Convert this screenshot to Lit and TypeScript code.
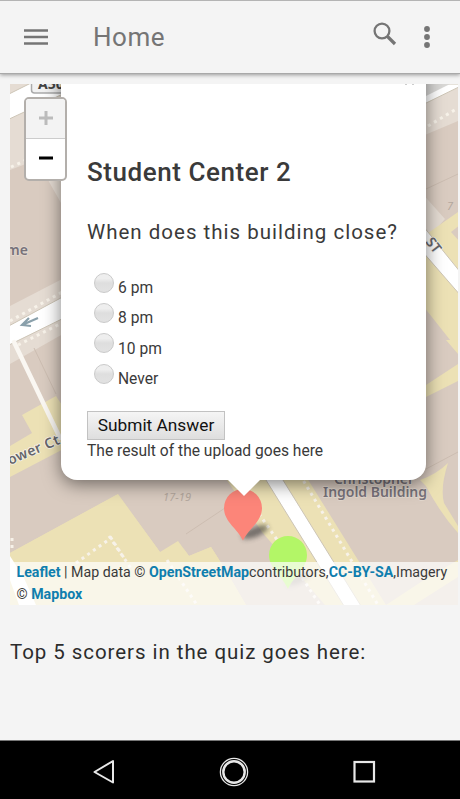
import { LitElement, html, css, svg } from "lit";
import { customElement } from "lit/decorators.js";

@customElement("map-canvas")
class MapCanvas extends LitElement {
  static styles = css`
    :host { display: block; width: 448px; height: 521px; }
    svg { display: block; }
    .label { font: 600 14px "Noto Sans", "Open Sans", sans-serif; fill: #77727a; stroke: #e4dad0; stroke-width: 1.5px; paint-order: stroke; }
    .street { fill: #66666a; stroke: #f7f4ee; }
    .num { font: italic 11px "Noto Sans", sans-serif; fill: #b3a79d; }
    .dots { fill: none; stroke: #f7f2e9; stroke-width: 3; stroke-dasharray: 3 4; }
    .road { fill: #fff; stroke: #cdc5b6; stroke-width: 1; }
    .yellow { fill: #ece1b5; }
    .walk { fill: #e5dcd3; }
    .block { fill: #d9cbc0; }
    .seam { fill: none; stroke: #ccbdb1; stroke-width: 1; }
  `;
  render() {
    return html`<svg width="448" height="521" viewBox="10 84 448 521">
      <defs>
        <filter id="soft" x="-50%" y="-50%" width="200%" height="200%"><feGaussianBlur stdDeviation="2.6" /></filter>
      </defs>
      <rect class="block" x="10" y="84" width="448" height="521" />
      ${svg`
      <path class="walk" d="M10 84H75V145L10 170Z" />
      <path class="road" d="M5 96L33 82H80V86L5 121Z" />
      <path class="dots" d="M11 167L65 142" />
      <path class="walk" d="M48 180L61 203V176Z" />
      <path class="walk" d="M10 306L70 275V330L10 364Z" />
      <path class="road" d="M5 328L70 293V315L5 347Z" />
      <path class="dots" d="M10 321L66 290M18 345L66 321" />
      <path d="M38 318L22 325M29 318L22 325L31 326" stroke="#8aa0ab" stroke-width="2.2" fill="none" />
      <path class="seam" d="M34 348L56 394" />
      <path class="yellow" d="M10 446L32 433L22 415L56 396L75 425V443L10 477Z" />
      <path d="M14 342L60 438" stroke="#faf7f2" stroke-width="4.5" stroke-linecap="round" />
      <path class="yellow" d="M10 553L122 492L160 552L178 541L189 556L211 547L225 569L246 605H10Z" />
      <path class="block" d="M110 470H222L236 500L250 540L160 552L118 495Z" />
      <path class="yellow" d="M10 553L118 494L160 552L178 541L189 556L211 547L225 569L246 605H10Z" />
      <path class="seam" d="M186 534L225 508" />
      <path class="dots" d="M76 563L111 538L126 561M109 536L132 570" />
      <path d="M10 556L24 578L36 605H19L10 580Z" fill="#fff" />
      <path class="dots" d="M12 538V550M167 560L197 605" />

      <path class="yellow" d="M220 470H302L386 605H325L262 532Z" />
      <path class="dots" d="M259 514L280 544L320 605M300 475L378 605" />
      <path class="road" d="M261 472H278L361 606H344Z" />
      <path class="yellow" d="M386 605L427 578L458 560V577L414 605Z" />

      <path class="walk" d="M420 84H458V121L420 137Z" />
      <path class="road" d="M420 84H465V84L420 106Z" />
      <path d="M426 84H450L426 96Z" fill="#d9d8d6" />
      <path class="dots" d="M428 126L458 108" />
      <path class="seam" d="M426 189L458 174M426 469L458 452" />
      <path class="walk" d="M420 191L445 219L432 234L420 232Z" />
      <path class="yellow" d="M431 231L458 212V350L420 302V238Z" />
      <path class="block" d="M451 232L460 225V242Z" />
      <path class="road" d="M415 216L461 273V296L415 243Z" />
      <path class="yellow" d="M426 385L458 364V381L426 397ZM446 340H458V354Z" />
      <path class="yellow" d="M420 480Q437 474 448 463Q440 488 444 503L458 526V533Q440 513 426 486Z" />
      <text class="label" text-anchor="end" x="28" y="255">me</text>
      <text class="label street" transform="translate(10 465) rotate(-23)" x="0" y="0" textLength="55">ower Ct</text>
      <text class="label street" transform="translate(425 242) rotate(52)" x="0" y="0">ST</text>
      <text class="num" x="163" y="501" textLength="28">17-19</text>
      <text class="num" x="447" y="210">7</text>
      <text class="label" x="334" y="484" textLength="80">Christopher</text>
      <text class="label" x="323" y="497" textLength="104">Ingold Building</text>
      <rect x="31.500" y="70" width="50" height="23" rx="3" fill="#f2f2f2" stroke="#aaa" stroke-width="1.5" />
      <text x="38" y="89" font-family="Noto Sans" font-weight="700" font-size="14" fill="#444">A501</text>

      <ellipse cx="255" cy="532" rx="14" ry="5" transform="rotate(-22 255 532)" fill="#333" opacity=".6" filter="url(#soft)" />
      <ellipse cx="299" cy="579" rx="13" ry="4" transform="rotate(-25 299 579)" fill="#333" opacity=".3" filter="url(#soft)" />
      <path d="M243 540.500C238 529 224 522 224 508A19 19 0 0 1 262 508C262 522 248 529 243 540.500Z" fill="#fc8579" />
      <path d="M288 589C283 577 269 569 269 555A19 19 0 0 1 307 555C307 569 293 577 288 589Z" fill="#b3f667" />
      `}
    </svg>`;
  }
}

@customElement("app-root")
class AppRoot extends LitElement {
  static styles = css`
    :host { display: flex; flex-direction: column; width: 460px; height: 799px; background: #f4f4f4; font-family: Roboto, sans-serif; color: #3a3a3a; overflow: hidden; }
    * { box-sizing: border-box; }
    header { height: 74px; flex: none; display: flex; align-items: center; padding: 0 30px 0 24px; border-top: 1px solid #b4b4b4; border-bottom: 1px solid #a9a9a9; box-shadow: 0 1px 4px rgba(0,0,0,.38); color: #757575; position: relative; }
    header svg { display: block; flex: none; }
    h1 { flex: 1; margin: 0 0 0 45px; font-size: 26px; font-weight: 400; letter-spacing: .5px; line-height: 30px; }
    .search { margin: 0 27px 6px 0; }
    .map { position: relative; width: 448px; height: 521px; margin: 10px 0 0 10px; flex: none; overflow: hidden; }
    .zoom { position: absolute; left: 14px; top: 13px; width: 43px; height: 84px; border: 2px solid #b3afab; border-radius: 5px; background: #fff; overflow: hidden; }
    .zoom div { height: 40px; display: grid; place-items: center; }
    .zoom .in { background: #f3f3f3; border-bottom: 1px solid #ccc; }
    .zoom svg { display: block; margin-top: -2px; }
    .popup { position: absolute; left: 51px; top: -20px; width: 365px; height: 416px; border-radius: 0 0 16px 16px; background: #fff; box-shadow: 0 4px 18px rgba(0,0,0,.5); padding: 92px 26px 0; }
    .tip { position: absolute; left: 217px; top: 395px; }
    .close { position: absolute; right: 12px; top: 19px; width: 9px; height: 3px; display: flex; justify-content: space-between; }
    .close i { width: 2px; height: 2px; background: #ccc; }
    h2 { margin: 0; font-size: 26px; line-height: 32px; font-weight: 500; letter-spacing: .55px; white-space: nowrap; }
    .question { margin: 30px 0 0; font-size: 20.5px; line-height: 28px; letter-spacing: 1px; white-space: nowrap; }
    .options { margin-top: 24px; }
    label { display: flex; height: 30.4px; padding-left: 7px; gap: 4px; font-size: 15.6px; line-height: 18px; }
    .radio { width: 20px; height: 20px; margin-top: 2.500px; border-radius: 50%; border: 1px solid #cacaca; background: linear-gradient(#eee 25%, #dedede 50%, #e2e2e2); }
    label span { margin-top: 9px; }
    button { display: block; width: 138px; height: 29px; margin: 19px 0 0; padding: 0; border: 1px solid #c2c2c2; border-radius: 0; background: linear-gradient(#f5f5f5, #dedede); font: 17.3px/26px Roboto, sans-serif; color: #111; white-space: nowrap; }
    .result { font-size: 15.6px; line-height: 20px; margin-top: 1px; white-space: nowrap; }
    .credit { position: absolute; left: 0; right: 0; bottom: 0; height: 43px; padding: 0 6.500px; background: rgba(255,255,255,.7); font-size: 14.200px; line-height: 21.500px; white-space: nowrap; }
    .credit b { color: #0f7eae; font-weight: 700; }
    .scores { margin: 33px 0 0 10px; font-size: 20.5px; line-height: 28px; letter-spacing: .94px; color: #2c2c2c; }
    nav { margin-top: auto; height: 59px; background: #000; border-top: 1px solid #777; flex: none; }
    nav svg { display: block; }
  `;
  render() {
    return html`
      <header>
        <svg width="24" height="20" viewBox="0 0 24 20"><path d="M0 3.500H24M0 10H24M0 16.500H24" stroke="#757575" stroke-width="2.500" /></svg>
        <h1>Home</h1>
        <svg class="search" width="24" height="24" viewBox="0 0 24 24" fill="none" stroke="#757575"><circle cx="9" cy="9" r="7.400" stroke-width="2.300" /><path d="M14.500 14.500L22 22" stroke-width="3.200" /></svg>
        <svg width="6" height="22" viewBox="0 0 6 22" fill="#757575"><circle cx="3" cy="3" r="2.900" /><circle cx="3" cy="11" r="2.900" /><circle cx="3" cy="19" r="2.900" /></svg>
      </header>
      <section class="map">
        <map-canvas></map-canvas>
        <div class="popup">
          <div class="close"><i></i><i></i></div>
          <h2>Student Center 2</h2>
          <p class="question">When does this building close?</p>
          <div class="options">
            ${["6 pm", "8 pm", "10 pm", "Never"].map((o) => html`<label><i class="radio"></i><span>${o}</span></label>`)}
          </div>
          <button>Submit Answer</button>
          <div class="result">The result of the upload goes here</div>
        </div>
        <svg class="tip" width="34" height="18" viewBox="0 0 34 18"><path d="M0 0H34L17 17Z" fill="#fff" /></svg>
        <div class="zoom">
          <div class="in"><svg width="14" height="14"><path d="M0 7H14M7 0V14" stroke="#bbb" stroke-width="3" /></svg></div>
          <div><svg width="14" height="14"><path d="M0 7H14" stroke="#000" stroke-width="3" /></svg></div>
        </div>
        <div class="credit"><b>Leaflet</b> | Map data © <b>OpenStreetMap</b>contributors,<b>CC-BY-SA</b>,Imagery<br />© <b>Mapbox</b></div>
      </section>
      <p class="scores">Top 5 scorers in the quiz goes here:</p>
      <nav>
        <svg width="460" height="58" viewBox="0 741 460 58" fill="none" stroke="#e8e8e8">
          <path d="M113 761V782.500L94.500 772Z" stroke-width="2" stroke-linejoin="round" />
          <circle cx="234" cy="772" r="13.600" stroke-width="1.300" /><circle cx="234" cy="772" r="10.700" stroke-width="2.400" />
          <rect x="354.500" y="762" width="19.500" height="19.500" stroke-width="2.200" />
        </svg>
      </nav>
    `;
  }
}
